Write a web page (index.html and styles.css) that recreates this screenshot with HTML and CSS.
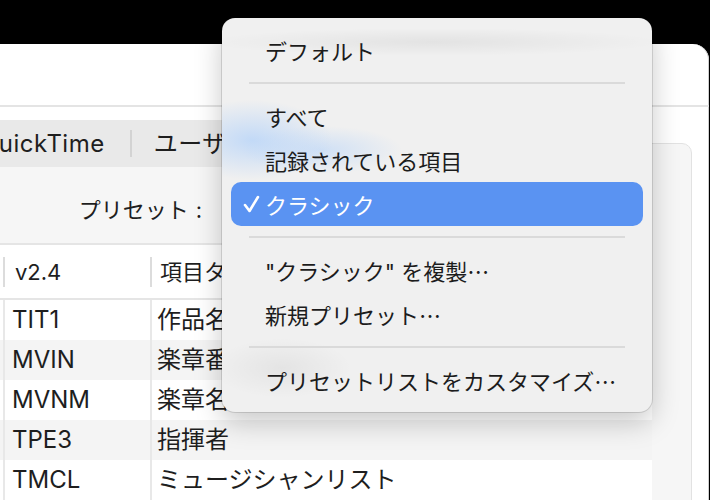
FILE: index.html
```html
<!DOCTYPE html>
<html lang="ja">
<head>
<meta charset="utf-8">
<title>プリセット</title>
<link rel="stylesheet" href="styles.css">
</head>
<body>
<div class="window">
  <div class="toolbar"></div>
  <div class="content">
    <div class="tabs">
      <div class="seg seg-first">QuickTime</div>
      <div class="tab-div"></div>
      <div class="seg">ユーザー設定</div>
    </div>
    <div class="box">
      <div class="preset-row">
        <span class="preset-label">プリセット<span class="colon">:</span></span>
        <span class="popup">クラシック</span>
      </div>
      <div class="table">
        <div class="thead">
          <div class="th"></div>
          <div class="th"><span class="hcell hc2">v2.4</span></div>
          <div class="th"><span class="hcell hc3">項目タイトル</span></div>
        </div>
        <div class="row"><div class="td"></div><div class="td c2">TIT1</div><div class="td c3">作品名</div></div>
        <div class="row"><div class="td"></div><div class="td c2">MVIN</div><div class="td c3">楽章番号</div></div>
        <div class="row"><div class="td"></div><div class="td c2">MVNM</div><div class="td c3">楽章名</div></div>
        <div class="row"><div class="td"></div><div class="td c2">TPE3</div><div class="td c3">指揮者</div></div>
        <div class="row"><div class="td"></div><div class="td c2">TMCL</div><div class="td c3">ミュージシャンリスト</div></div>
      </div>
    </div>
  </div>
</div>

<div class="menu">
  <div class="item">デフォルト</div>
  <div class="sep"><span></span></div>
  <div class="item">すべて</div>
  <div class="item">記録されている項目</div>
  <div class="item sel">
    <svg class="check" width="18" height="20" viewBox="0 0 18 20"><polyline points="2,11 6.5,17 15,3" fill="none" stroke="#fff" stroke-width="2.6" stroke-linecap="round" stroke-linejoin="round"/></svg>
    クラシック
  </div>
  <div class="sep"><span></span></div>
  <div class="item">"クラシック" を複製<span class="ell">…</span></div>
  <div class="item">新規プリセット<span class="ell">…</span></div>
  <div class="sep"><span></span></div>
  <div class="item">プリセットリストをカスタマイズ<span class="ell">…</span></div>
</div>
</body>
</html>
```

FILE: styles.css
```css
html, body {
  margin: 0;
  padding: 0;
}
body {
  width: 710px;
  height: 500px;
  overflow: hidden;
  background: #000;
  position: relative;
  font-family: Inter, "Noto Sans CJK JP", sans-serif;
  color: #1e1e1e;
}
.window {
  margin: 44px 0 0 -40px;
  width: 749px;
  height: 470px;
  background: #fff;
  border-radius: 16px 16px 0 0;
  overflow: hidden;
  box-shadow: inset -1px 0 0 #cfcfcf;
}
.toolbar {
  height: 61px;
  border-bottom: 2px solid #e4e4e4;
}
.content {
  display: flex;
  flex-direction: column;
  padding: 13px 17px 0 20px;
}
.tabs {
  position: relative;
  z-index: 1;
  align-self: flex-start;
  display: flex;
  align-items: center;
  height: 47px;
  margin-left: -22px;
  background: #e9e9e9;
  border-radius: 9px;
  font-size: 24px;
  letter-spacing: 0.5px;
  line-height: 47px;
}
.seg {
  padding: 0 120px 0 22px;
  white-space: nowrap;
}
.seg-first {
  padding-right: 25px;
}
.tab-div {
  width: 2px;
  height: 27px;
  background: #d3d3d3;
}
.box {
  margin-top: -24px;
  background: #f6f6f6;
  border: 1px solid #e2e2e2;
  border-radius: 10px;
  padding-top: 23px;
  height: 360px;
}
.preset-row {
  height: 76px;
  box-sizing: border-box;
  padding-top: 6px;
  display: flex;
  align-items: center;
  font-size: 22px;
}
.preset-label {
  width: 221px;
  text-align: right;
}
.colon {
  margin-left: 7px;
}
.popup {
  margin-left: 26px;
  color: #fff;
  background: #5a93f2;
  border-radius: 8px;
  padding: 4px 16px;
}
.table {
  margin-right: 39px;
  background: #fff;
  border-top: 2px solid #e5e5e5;
}
.thead, .row {
  display: grid;
  grid-template-columns: 22px 147px 1fr;
}
.thead {
  height: 53px;
  border-bottom: 2px solid #e5e5e5;
  align-items: center;
  font-size: 22px;
}
.hcell {
  display: block;
  height: 30px;
  line-height: 30px;
  border-left: 2px solid #dcdcdc;
  white-space: nowrap;
}
.hc2 { padding-left: 10px; }
.hc3 { padding-left: 8px; }
.row {
  height: 40px;
  line-height: 40px;
  font-size: 24px;
}
.row:nth-child(odd) {
  background: #f4f4f4;
}
.td {
  white-space: nowrap;
}
.c2, .c3 {
  border-left: 2px solid #e8e8e8;
}
.c2 { padding-left: 7px; }
.c3 { padding-left: 5px; }

.menu {
  position: absolute;
  z-index: 10;
  left: 222px;
  top: 18px;
  width: 430px;
  box-sizing: border-box;
  padding: 10px 0;
  border-radius: 13px;
  font-size: 22px;
  color: #1c1c1c;
  background:
    radial-gradient(ellipse 230px 14px at 212px 24px, rgba(0,0,0,0.055), rgba(0,0,0,0)),
    radial-gradient(ellipse 80px 40px at 30px 122px, rgba(175,208,250,0.7), rgba(175,208,250,0)),
    radial-gradient(ellipse 80px 24px at 100px 132px, rgba(175,208,250,0.5), rgba(175,208,250,0)),
    radial-gradient(ellipse 70px 30px at 60px 350px, rgba(0,0,0,0.05), rgba(0,0,0,0)),
    #f0f0f0;
  box-shadow: 0 0 0 1px rgba(0,0,0,0.12), 0 10px 28px rgba(0,0,0,0.22);
}
.item {
  position: relative;
  height: 44px;
  margin: 0 9px;
  padding-left: 34px;
  display: flex;
  align-items: center;
  border-radius: 10px;
  white-space: nowrap;
}
.item.sel {
  background: #5a93f2;
  color: #fff;
}
.check {
  position: absolute;
  left: 12px;
  top: 12px;
}
.ell {
  font-family: "Noto Sans CJK JP", sans-serif;
}
.sep {
  height: 22px;
  display: flex;
  align-items: center;
}
.sep span {
  flex: 1;
  margin: 0 27px;
  height: 2px;
  background: #dadada;
}
```
